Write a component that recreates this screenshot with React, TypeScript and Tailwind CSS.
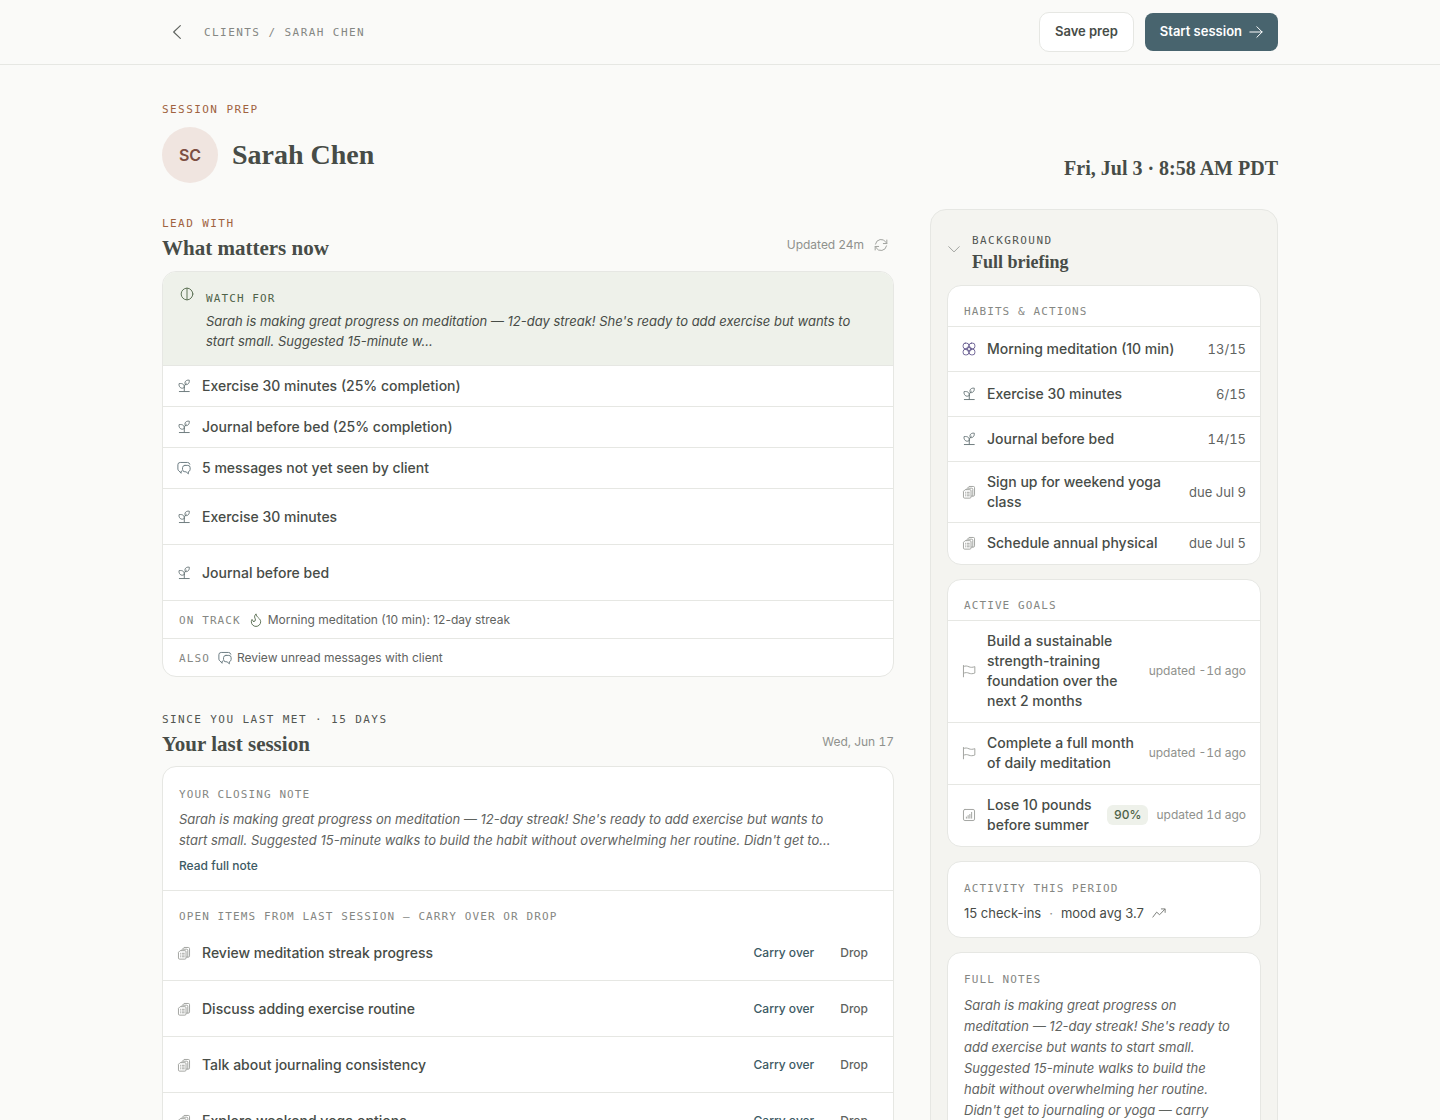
import type { ReactNode } from 'react';

type IconProps = { className?: string };

function Svg({ className = '', children }: { className?: string; children: ReactNode }) {
  return (
    <svg
      viewBox="0 0 24 24"
      fill="none"
      stroke="currentColor"
      strokeWidth={1.7}
      strokeLinecap="round"
      strokeLinejoin="round"
      aria-hidden="true"
      className={`shrink-0 ${className}`}
    >
      {children}
    </svg>
  );
}

const SproutIcon = ({ className = 'size-3.5 text-[#6f7c7e]' }: IconProps) => (
  <Svg className={className}>
    <path d="M4 21.500h17M12.500 21.500v-8c0-2.500 1.300-4.300 3.500-6" />
    <path d="M12.500 14.500c-2 1.800-5 1.800-7 0C3.800 13 3.200 10.500 3.500 8c3-.6 6-.2 7.500 1.500 1.300 1.400 1.800 3 1.500 5z" />
    <path d="M14.500 9.500c-1.200-1.500-1.200-4 .2-5.700C16.200 2.200 18.500 1.700 21 2c.3 2.500-.2 4.800-1.700 6.200-1.500 1.400-3.300 1.900-4.800 1.300z" />
  </Svg>
);

const ChatsIcon = ({ className = 'size-3.5 text-[#6d7d84]' }: IconProps) => (
  <Svg className={className}>
    <path d="M8 17.500H7V21l-3.500-4A3.500 3.500 0 0 1 1.500 14V6.500a4 4 0 0 1 4-4H18a4 4 0 0 1 4 3" />
    <path d="M13.500 7.500h5a4 4 0 0 1 4 4v3a4 4 0 0 1-3 3.800V22l-4-3.500h-2a4 4 0 0 1-4-4v-3a4 4 0 0 1 4-4z" />
  </Svg>
);

const TasksIcon = ({ className = 'size-3.5 text-[#a3a5a1]' }: IconProps) => (
  <Svg className={className}>
    <path d="M6 8h7.500a2 2 0 0 1 2 2v10.500a2 2 0 0 1-2 2h-9a2 2 0 0 1-2-2V11.500z" />
    <path d="M7.500 7.500 12 2.500h7.500a2 2 0 0 1 2 2V17a2 2 0 0 1-2 2h-3.500" />
    <path d="M11 5.500h5.500a2 2 0 0 1 2 2V19" />
    <path d="M6 12.500h.5M9 12.500h3.500M6 15.500h.5M9 15.500h3.500M6 18.500h.5M9 18.500h3.500" />
  </Svg>
);

const FlagIcon = ({ className = 'size-3.5 text-[#a3a5a1]' }: IconProps) => (
  <Svg className={className}>
    <path d="M2.500 22V2.500M2.500 4.500c3.500-2 6.500-1 9.500.3s6 1.200 10-.3v11c-4 1.500-7 1.500-10 .3s-6-1.800-9.500.2" />
  </Svg>
);

const ChartIcon = ({ className = 'size-3.5 text-[#a3a5a1]' }: IconProps) => (
  <Svg className={className}>
    <rect x="2.500" y="2.500" width="19" height="19" rx="2.500" />
    <path d="M7.500 17.500v-2M10.500 17.500v-4.500M13.500 17.500v-6.500M16.500 17.500V7.500" />
  </Svg>
);

const FlowerIcon = ({ className = 'size-3.5 text-[#6f6596]' }: IconProps) => (
  <Svg className={className}>
    <rect x="2" y="2" width="9.500" height="9.500" rx="3.500" />
    <rect x="12.500" y="2" width="9.500" height="9.500" rx="3.500" />
    <rect x="2" y="12.500" width="9.500" height="9.500" rx="3.500" />
    <rect x="12.500" y="12.500" width="9.500" height="9.500" rx="3.500" />
    <circle cx="12" cy="12" r="4" />
  </Svg>
);

const FlameIcon = ({ className = 'size-3.5 text-[#5f7358]' }: IconProps) => (
  <Svg className={className}>
    <path d="M8 14.500a2.700 2.700 0 0 0 3-2.500c0-1.500-.5-2.500-1-3.500C8.900 6 10 3.800 12 1.500c.5 3 2.300 5.300 4.500 7.200 2.400 2 3.500 4 3.500 6.300a8 8 0 0 1-16 0c0-1.800.5-3.200 1.200-4 .2 2 1.300 3.300 2.800 3.500z" />
  </Svg>
);

const InsightIcon = ({ className = 'size-3.5 text-[#5f7358]' }: IconProps) => (
  <Svg className={className}>
    <circle cx="12" cy="12" r="10" />
    <path d="M12 2v20" />
  </Svg>
);

const RefreshIcon = ({ className = 'size-3.5 text-[#a0a29e]' }: IconProps) => (
  <Svg className={className}>
    <path d="M2.500 10.500a9.700 9.700 0 0 1 18-3l1.500 2M22 3.500v6h-6" />
    <path d="M21.500 13.500a9.700 9.700 0 0 1-18 3l-1.500-2M2 20.500v-6h6" />
  </Svg>
);

const TrendIcon = ({ className = 'size-3.5 text-[#7c807b]' }: IconProps) => (
  <Svg className={className}>
    <path d="M1.500 19 8 10.500l5 4.500 9-9.500M16 5h6.500v6" />
  </Svg>
);

const ArrowRightIcon = ({ className = 'size-3.5' }: IconProps) => (
  <Svg className={className}>
    <path d="M1.500 12h21M13.500 3l9 9-9 9" />
  </Svg>
);

const ChevronLeftIcon = ({ className = 'size-4' }: IconProps) => (
  <Svg className={className}>
    <path d="m17 2.500-10 9.500 10 9.500" />
  </Svg>
);

const ChevronDownIcon = ({ className = 'size-3.5' }: IconProps) => (
  <Svg className={className}>
    <path d="m3 8 9 9 9-9" />
  </Svg>
);

const serif = "font-['Liberation_Serif',serif] font-bold text-[#474c47]";
const mono = "font-['DejaVu_Sans_Mono',monospace] text-[11px] leading-3.5 pt-0.5 uppercase";

function Eyebrow({ className = 'text-[#525652]', children }: { className?: string; children: ReactNode }) {
  return <span className={`block tracking-[0.13em] ${mono} ${className}`}>{children}</span>;
}

function CardLabel({ className = 'text-[#858783]', children }: { className?: string; children: ReactNode }) {
  return <h3 className={`tracking-widest ${mono} ${className}`}>{children}</h3>;
}

function Card({ className = '', children }: { className?: string; children: ReactNode }) {
  return (
    <section className={`overflow-hidden rounded-[14px] border border-[#e6e7e3] bg-white ${className}`}>{children}</section>
  );
}

const focusItems = [
  { icon: <SproutIcon />, title: 'Exercise 30 minutes (25% completion)', height: 'h-[41px]' },
  { icon: <SproutIcon />, title: 'Journal before bed (25% completion)', height: 'h-[41px]' },
  { icon: <ChatsIcon />, title: '5 messages not yet seen by client', height: 'h-[41px]' },
  { icon: <SproutIcon />, title: 'Exercise 30 minutes', height: 'h-14' },
  { icon: <SproutIcon />, title: 'Journal before bed', height: 'h-14' },
];

const openItems = [
  'Review meditation streak progress',
  'Discuss adding exercise routine',
  'Talk about journaling consistency',
  'Explore weekend yoga options',
];

const habits = [
  { icon: <FlowerIcon />, title: 'Morning meditation (10 min)', meta: '13/15', pad: 'py-3' },
  { icon: <SproutIcon />, title: 'Exercise 30 minutes', meta: '6/15', pad: 'py-3' },
  { icon: <SproutIcon />, title: 'Journal before bed', meta: '14/15', pad: 'py-3' },
  { icon: <TasksIcon />, title: 'Sign up for weekend yoga class', meta: 'due Jul 9', pad: 'py-2.5' },
  { icon: <TasksIcon />, title: 'Schedule annual physical', meta: 'due Jul 5', pad: 'pt-2.5 pb-[11px]' },
];

const goals = [
  {
    icon: <FlagIcon />,
    title: 'Build a sustainable strength-training foundation over the next 2 months',
    meta: 'updated -1d ago',
  },
  { icon: <FlagIcon />, title: 'Complete a full month of daily meditation', meta: 'updated -1d ago' },
  { icon: <ChartIcon />, title: 'Lose 10 pounds before summer', meta: 'updated 1d ago', progress: '90%' },
];

function Header() {
  return (
    <header className="border-b border-[#e6e7e3]">
      <div className="mx-auto flex h-16 max-w-[1164px] items-center justify-between px-6">
        <div className="flex items-center gap-3">
          <button type="button" aria-label="Back to clients" className="flex size-[30px] items-center justify-center text-[#5f635f]">
            <ChevronLeftIcon />
          </button>
          <Eyebrow className="text-[#858783]">Clients / Sarah Chen</Eyebrow>
        </div>
        <div className="flex items-center gap-[11px]">
          <button type="button" className="h-10 rounded-[10px] border border-[#e6e7e3] bg-white px-[15px] text-[13px] font-semibold text-[#474c47]">
            Save prep
          </button>
          <button type="button" className="flex h-[38px] items-center gap-[7px] rounded-lg bg-[#48646e] px-[15px] text-[13px] font-semibold text-white">
            Start session
            <ArrowRightIcon />
          </button>
        </div>
      </div>
    </header>
  );
}

function WhatMattersNow() {
  return (
    <div>
      <div className="flex items-end justify-between">
        <div>
          <Eyebrow className="text-[#a0623f]">Lead with</Eyebrow>
          <h2 className={`mt-1 text-[21px] leading-[26px] ${serif}`}>What matters now</h2>
        </div>
        <div className="flex items-center gap-1 pb-1 text-xs text-[#8f918d]">
          Updated 24m
          <button type="button" aria-label="Refresh" className="flex h-6 w-[26px] items-center justify-center">
            <RefreshIcon />
          </button>
        </div>
      </div>
      <Card className="mt-2.5">
        <div className="flex gap-3 bg-[#eef1ea] px-[17px] pt-[15px] pb-3.5">
          <InsightIcon />
          <div className="pt-[3px]">
            <CardLabel className="text-[#4f6349]">Watch for</CardLabel>
            <p className="mt-[5px] text-[13px] leading-5 text-[#474c47] italic">
              Sarah is making great progress on meditation — 12-day streak! She's ready to add exercise but wants to start
              small. Suggested 15-minute w...
            </p>
          </div>
        </div>
        <ul>
          {focusItems.map((item) => (
            <li
              key={item.title}
              className={`flex items-center gap-[11px] border-t border-[#e6e7e3] px-3.5 text-sm font-medium text-[#474c47] ${item.height}`}
            >
              {item.icon}
              {item.title}
            </li>
          ))}
        </ul>
        <div className="flex h-[38px] items-center border-t border-[#e6e7e3] px-4 text-xs text-[#5f635f]">
          <CardLabel>On track</CardLabel>
          <FlameIcon className="mr-[5px] ml-2 size-3.5 text-[#5f7358]" />
          Morning meditation (10 min): 12-day streak
        </div>
        <div className="flex h-[38px] items-center border-t border-[#e6e7e3] px-4 text-xs text-[#5f635f]">
          <CardLabel>Also</CardLabel>
          <ChatsIcon className="mr-[5px] ml-2 size-3.5 text-[#6d7d84]" />
          Review unread messages with client
        </div>
      </Card>
    </div>
  );
}

function LastSession() {
  return (
    <div className="mt-[34px]">
      <div className="flex items-end justify-between">
        <div>
          <Eyebrow>Since you last met · 15 days</Eyebrow>
          <h2 className={`mt-1 text-[21px] leading-[26px] ${serif}`}>Your last session</h2>
        </div>
        <p className="pb-[5px] text-xs leading-5 text-[#8f918d] tabular-nums">Wed, Jun 17</p>
      </div>
      <Card className="mt-[9px]">
        <div className="px-4 pt-[19px] pb-3.5">
          <CardLabel>Your closing note</CardLabel>
          <p className="mt-[7px] pr-8 text-[13px] leading-[21px] text-[#5f635f] italic">
            Sarah is making great progress on meditation — 12-day streak! She's ready to add exercise but wants to start
            small. Suggested 15-minute walks to build the habit without overwhelming her routine. Didn't get to...
          </p>
          <a href="#note" className="mt-[5px] block text-xs leading-5 font-medium text-[#3d5a64]">
            Read full note
          </a>
        </div>
        <div className="border-t border-[#e6e7e3] pt-[17px]">
          <div className="px-4 pb-px">
            <CardLabel>Open items from last session — carry over or drop</CardLabel>
          </div>
          <ul className="divide-y divide-[#e6e7e3]">
            {openItems.map((item) => (
              <li key={item} className="flex h-14 items-center gap-[11px] px-3.5 text-sm font-medium text-[#474c47]">
                <TasksIcon />
                <span className="flex-1">{item}</span>
                <div className="flex gap-1 text-xs">
                  <button type="button" className="h-8 px-[11px] text-[#3d5a64]">
                    Carry over
                  </button>
                  <button type="button" className="h-8 px-[11px] text-[#5f635f]">
                    Drop
                  </button>
                </div>
              </li>
            ))}
          </ul>
        </div>
      </Card>
    </div>
  );
}

function Briefing() {
  return (
    <aside className="rounded-2xl border border-[#e6e7e3] bg-[#f4f4f0] px-4 pt-[22px] pb-4">
      <button type="button" className="flex items-start gap-[11px] text-left">
        <ChevronDownIcon className="mt-2.5 size-3.5 text-[#a0a29e]" />
        <span className="block">
          <Eyebrow>Background</Eyebrow>
          <span className={`mt-1 block text-lg leading-5 ${serif}`}>Full briefing</span>
        </span>
      </button>

      <div className="mt-[13px] space-y-3.5">
        <Card>
          <div className="px-4 pt-[17px] pb-[7px]">
            <CardLabel>Habits &amp; actions</CardLabel>
          </div>
          <ul>
            {habits.map((habit) => (
              <li key={habit.title} className={`flex items-center gap-[11px] border-t border-[#e6e7e3] px-3.5 ${habit.pad}`}>
                {habit.icon}
                <span className="flex-1 text-sm leading-5 font-medium text-[#474c47]">{habit.title}</span>
                <span className="text-[13px] leading-5 whitespace-nowrap text-[#5f635f] tabular-nums">{habit.meta}</span>
              </li>
            ))}
          </ul>
        </Card>

        <Card>
          <div className="px-4 pt-[17px] pb-[7px]">
            <CardLabel>Active goals</CardLabel>
          </div>
          <ul>
            {goals.map((goal) => (
              <li key={goal.title} className="flex items-center gap-[11px] border-t border-[#e6e7e3] px-3.5 pt-2.5 pb-[11px]">
                {goal.icon}
                <span className="flex-1 text-sm leading-5 font-medium text-[#474c47]">{goal.title}</span>
                <span className="flex items-center gap-2 text-xs whitespace-nowrap text-[#8f918d] tabular-nums">
                  {goal.progress && (
                    <span className="rounded-md bg-[#eef1ea] px-[7px] py-0.5 font-medium text-[#4d6147]">{goal.progress}</span>
                  )}
                  {goal.meta}
                </span>
              </li>
            ))}
          </ul>
        </Card>

        <Card className="px-4 pt-[18px] pb-[13px]">
          <CardLabel>Activity this period</CardLabel>
          <p className="mt-1.5 flex items-center text-[13px] leading-[22px] text-[#474c47]">
            15 check-ins
            <span className="mx-2 text-[#8f918d]">·</span>
            mood avg 3.7
            <TrendIcon className="ml-2 size-3.5 text-[#7c807b]" />
          </p>
        </Card>

        <Card className="px-4 pt-[18px] pb-4">
          <CardLabel>Full notes</CardLabel>
          <p className="mt-2 pr-2 text-[13px] leading-[21px] text-[#5f635f] italic">
            Sarah is making great progress on meditation — 12-day streak! She's ready to add exercise but wants to start
            small. Suggested 15-minute walks to build the habit without overwhelming her routine. Didn't get to journaling
            or yoga — carry
          </p>
        </Card>
      </div>
    </aside>
  );
}

export default function App() {
  return (
    <div className="min-h-screen bg-[#fafaf8] font-['Inter',sans-serif] text-[#474c47] antialiased">
      <Header />
      <main className="mx-auto max-w-[1164px] px-6 pt-9 pb-12">
        <Eyebrow className="text-[#a0623f]">Session prep</Eyebrow>
        <div className="mt-2.5 flex items-center justify-between">
          <div className="flex items-center gap-3.5">
            <div className="flex size-14 items-center justify-center rounded-full bg-[#f0e5e0] font-semibold text-[#7d4f42]">
              SC
            </div>
            <h1 className={`text-[28px] leading-9 ${serif}`}>Sarah Chen</h1>
          </div>
          <p className={`self-end text-xl leading-[30px] ${serif}`}>Fri, Jul 3 · 8:58 AM PDT</p>
        </div>

        <div className="mt-[26px] grid grid-cols-[minmax(0,1fr)_348px] gap-9">
          <div className="pt-1.5">
            <WhatMattersNow />
            <LastSession />
          </div>
          <Briefing />
        </div>
      </main>
    </div>
  );
}
